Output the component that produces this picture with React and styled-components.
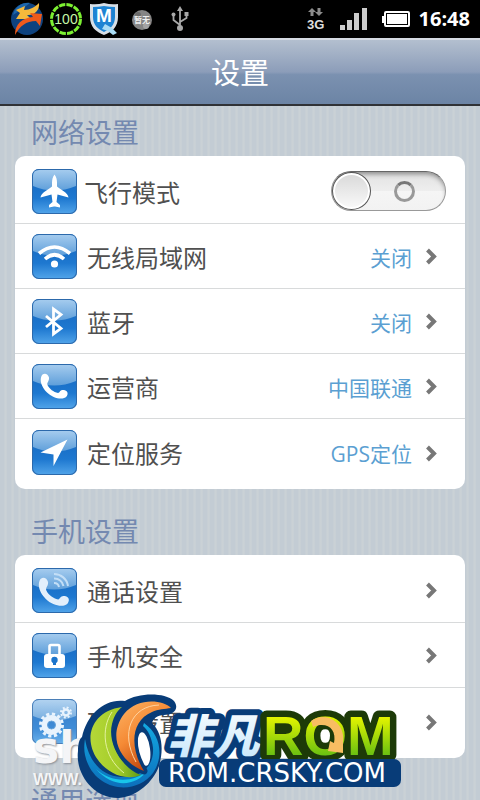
import { useState } from "react";
import styled, { createGlobalStyle } from "styled-components";

const App = () => {
  const [airplane, setAirplane] = useState(false);

  return (
    <Screen>
      <GlobalStyle />
      <StatusBar>
        <StatusGroup $gap={6}>
          <SwirlIcon />
          <BatteryRing />
          <ShieldIcon />
          <MoonIcon />
          <UsbIcon />
        </StatusGroup>
        <StatusGroup $gap={9}>
          <NetworkIcon />
          <SignalIcon />
          <BatteryIcon />
          <Clock>16:48</Clock>
        </StatusGroup>
      </StatusBar>

      <Header>
        <h1>设置</h1>
      </Header>

      <Content>
        <Section>
          <SectionTitle>网络设置</SectionTitle>
          <Card>
            <li>
              <ToggleRow>
                <Tile icon="plane" />
                <Label>飞行模式</Label>
                <Switch
                  type="checkbox"
                  role="switch"
                  checked={airplane}
                  onChange={(e) => setAirplane(e.target.checked)}
                />
              </ToggleRow>
            </li>
            <NavItem icon="wifi" label="无线局域网" value="关闭" />
            <NavItem icon="bluetooth" label="蓝牙" value="关闭" />
            <NavItem icon="phone" label="运营商" value="中国联通" />
            <NavItem icon="location" label="定位服务" value="GPS定位" />
          </Card>
        </Section>

        <Section>
          <SectionTitle>手机设置</SectionTitle>
          <Card>
            <NavItem icon="call" label="通话设置" />
            <NavItem icon="lock" label="手机安全" />
            <NavItem icon="gears" label="硬件设置" />
          </Card>
        </Section>

        <Section>
          <SectionTitle>通用选项</SectionTitle>
        </Section>
      </Content>

      <SiteMark>
        <strong>sh</strong>
        <span>WWW.</span>
      </SiteMark>
      <LogoLayer>
        <RomLogo />
      </LogoLayer>
    </Screen>
  );
};

const NavItem = ({ icon, label, value }) => (
  <li>
    <NavRow type="button">
      <Tile icon={icon} />
      <Label>{label}</Label>
      {value && <Value>{value}</Value>}
      <svg width="12" height="20" viewBox="0 0 12 20" aria-hidden="true">
        <path d="M2.5 4 9 10.500l-6.5 6.500" fill="none" stroke="#777" strokeWidth="4" />
      </svg>
    </NavRow>
  </li>
);

const handset =
  "M9.5 12C11 8.500 16 9 17 13.500C17.500 17 14.500 18.500 15.500 21C17.500 25 21.500 28 26 29C28 28.500 28 25.500 31.500 26C36 26.500 36.500 30 34.500 32.500C31 36.500 21 34.500 15 28.500C9.500 23 7.500 16.500 9.500 12Z";

const glyphs = {
  plane: (
    <path
      fill="#fff"
      d="M22.500 5.500C24.500 8 25 11 25 14V17.500C29 21 36 23.500 36.500 28.500L25.500 25.500 24.500 33 28 36V38.500L23 37.500H22L17 38.500V36L20.500 33 19.500 25.500 8.500 28.500C9 23.500 16 21 20 17.500V14C20 11 20.500 8 22.500 5.500Z"
    />
  ),
  wifi: (
    <g fill="none" stroke="#fff" strokeWidth="3.600">
      <path d="M7 19.500Q22.500 6.500 38 19.500" />
      <path d="M13 25Q22.500 16.500 32 25" />
      <circle cx="22.500" cy="30" r="3.600" fill="#fff" stroke="none" />
    </g>
  ),
  bluetooth: (
    <path
      d="M14 17 29 29.500 21.500 35V10L29 15.500 14 28"
      fill="none"
      stroke="#fff"
      strokeWidth="2.800"
    />
  ),
  phone: <path fill="#fff" d={handset} />,
  location: <path fill="#fff" d="M35.500 9.500 21.500 36V24.500L8.500 22.500Z" />,
  call: (
    <g fill="none" stroke="#c3def6" strokeWidth="2">
      <path
        d={handset}
        fill="#e3effb"
        stroke="none"
        transform="translate(-3 -1) scale(1.120)"
      />
      <path d="M22 6A14 14 0 0 1 36 18" />
      <path d="M22 10.500A9 9 0 0 1 31.500 18" />
      <path d="M22 15A5 5 0 0 1 27 19" />
    </g>
  ),
  lock: (
    <>
      <path
        d="M17.500 21V13.500Q17.500 12 19 12H26Q27.500 12 27.500 13.500V21"
        fill="none"
        stroke="#fff"
        strokeWidth="2.600"
      />
      <rect x="12" y="21" width="21" height="14" rx="3" fill="#fff" />
      <circle cx="22.500" cy="27" r="3.200" fill="#1b74cc" />
      <path d="M21 27H24V32H21Z" fill="#1b74cc" />
    </>
  ),
  gears: (
    <g fill="none" stroke="#e6f2fd">
      <circle cx="19.500" cy="26" r="7" strokeWidth="6" />
      <circle cx="19.500" cy="26" r="11" strokeWidth="3" strokeDasharray="3.200 2.560" />
      <circle cx="19.500" cy="26" r="4" stroke="#4e94d4" strokeWidth="1" />
      <circle cx="34" cy="13.500" r="3" strokeWidth="2.400" />
      <circle cx="34" cy="13.500" r="5" strokeWidth="2" strokeDasharray="1.970 1.960" />
    </g>
  ),
};

const Tile = ({ icon }) => (
  <TileBox $pale={icon === "gears"} aria-hidden="true">
    <svg width="45" height="45" viewBox="0 0 45 45">
      <defs>
        <linearGradient id={`gloss-${icon}`} x2="0" y2="1">
          <stop stopColor="#a4cbee" />
          <stop offset="1" stopColor="#5f9fda" />
        </linearGradient>
      </defs>
      <path
        d="M1 7Q1 1 7 1H38Q44 1 44 7V17Q22 26 1 17Z"
        fill={`url(#gloss-${icon})`}
      />
      {glyphs[icon]}
    </svg>
  </TileBox>
);

const SwirlIcon = () => (
  <svg width="34" height="36" viewBox="0 0 34 36" aria-hidden="true">
    <circle cx="17" cy="18" r="16" fill="#0d427f" />
    <path d="M3 14C5 5 13 1 20 2L12 8Z" fill="#1d67ad" />
    <path
      d="M6 9 15 5 14 9C20 9 25 6 29 2C30 9 24 15 17 14L21 18 6 18 10 12Z"
      fill="#f5b93c"
    />
    <path
      d="M5 34C5 23 12 17 23 16L20 12 32 13 30 25 26 20C16 20 10 25 5 34Z"
      fill="#ee5a1b"
    />
  </svg>
);

const BatteryRing = () => (
  <svg width="32" height="34" viewBox="0 0 32 34">
    <circle
      cx="16"
      cy="17"
      r="14.500"
      fill="none"
      stroke="#7cf032"
      strokeWidth="3"
      strokeDasharray="6.400 1.192"
    />
    <text
      x="16"
      y="22"
      textAnchor="middle"
      fontFamily="Liberation Sans, sans-serif"
      fontSize="14"
      fill="#c4f7a8"
    >
      100
    </text>
  </svg>
);

const ShieldIcon = () => (
  <svg width="32" height="34" viewBox="0 0 32 34">
    <path
      d="M2 2Q9 3 16 1Q23 3 30 2V15C30 25 24 30 16 33C8 30 2 25 2 15Z"
      fill="#d8dfe6"
    />
    <path
      d="M5 5Q10 5 16 4Q22 5 27 5V15C27 23 22 27 16 30C10 27 5 23 5 15Z"
      fill="#1d83d3"
    />
    <path d="M17 22 24 26 29 31 25 33 20 29 14 27Z" fill="#a9dcf5" />
    <text
      x="16"
      y="20"
      textAnchor="middle"
      fontFamily="Liberation Sans, sans-serif"
      fontWeight="700"
      fontSize="19"
      fill="#fff"
    >
      M
    </text>
  </svg>
);

const MoonIcon = () => (
  <svg width="32" height="34" viewBox="0 0 32 34">
    <circle cx="16" cy="18" r="10" fill="#858585" />
    <circle cx="12" cy="13" r="3" fill="#6a6a6a" />
    <circle cx="20" cy="24" r="3" fill="#a3a3a3" />
    <text
      x="16"
      y="21"
      textAnchor="middle"
      fontFamily="Noto Sans CJK SC, sans-serif"
      fontWeight="700"
      fontSize="8"
      fill="#eee"
    >
      暂无
    </text>
  </svg>
);

const UsbIcon = () => (
  <svg width="32" height="34" viewBox="0 0 32 34" aria-hidden="true">
    <g fill="none" stroke="#a8a8a8" strokeWidth="1.800">
      <path d="M16 28V7M16 23 9.500 18V13M16 20 22.500 16V12" />
    </g>
    <g fill="#a8a8a8">
      <circle cx="16" cy="26" r="3" />
      <circle cx="9.500" cy="12.500" r="2" />
      <path d="M16 4 19 9H13ZM20.500 10H24.500V14H20.500Z" />
    </g>
  </svg>
);

const NetworkIcon = () => (
  <svg width="20" height="26" viewBox="0 0 20 26">
    <path
      d="M5 2 9 6H6.500V10H3.500V6H1ZM12 10 8 6H10.500V2H13.500V6H16Z"
      fill="#8c8c8c"
    />
    <text
      x="0"
      y="23"
      fontFamily="Liberation Sans, sans-serif"
      fontWeight="700"
      fontSize="13"
      fill="#ddd"
    >
      3G
    </text>
  </svg>
);

const SignalIcon = () => (
  <svg width="36" height="24" viewBox="0 0 36 24" aria-hidden="true">
    <path
      d="M4 18H9V23H4ZM11 13H16V23H11ZM18 6H23V23H18ZM26 1H31V23H26Z"
      fill="#ccc"
    />
  </svg>
);

const BatteryIcon = () => (
  <svg width="29" height="18" viewBox="0 0 29 18" aria-hidden="true">
    <path d="M1 6H4V13H1Z" fill="#fff" />
    <rect x="4" y="2" width="24" height="14" rx="1" fill="none" stroke="#fff" strokeWidth="2" />
    <rect x="6" y="4" width="20" height="10" fill="#fff" />
  </svg>
);

const RomLogo = () => (
  <svg width="326" height="107" viewBox="78 693 326 107">
    <defs>
      <linearGradient id="ice" x2="0" y2="1">
        <stop stopColor="#fff" />
        <stop offset="1" stopColor="#c3e6fb" />
      </linearGradient>
      <linearGradient id="lime" x2="0" y2="1">
        <stop offset="0.200" stopColor="#e6f500" />
        <stop offset="0.850" stopColor="#62bd12" />
      </linearGradient>
      <linearGradient id="leaf">
        <stop stopColor="#b5d838" />
        <stop offset="0.550" stopColor="#a4cc2a" />
        <stop offset="1" stopColor="#5d9b16" />
      </linearGradient>
      <linearGradient id="flame" x2="0.600" y2="1">
        <stop stopColor="#fdb566" />
        <stop offset="0.500" stopColor="#f58a35" />
        <stop offset="1" stopColor="#b93c08" />
      </linearGradient>
      <linearGradient id="sea" x2="0" y2="1">
        <stop stopColor="#13a9e2" />
        <stop offset="1" stopColor="#0c6fbb" />
      </linearGradient>
    </defs>

    <path
      d="M83 737C88 714 106 698 126 701C139 693 165 692 175 701C181 709 174 715 165 715C158 715 154 719 153 723C163 733 165 749 160 766C154 782 139 796 120 798C95 799 76 774 79 751C79 745 80 739 83 737Z"
      fill="#083c78"
    />
    <path
      d="M145 723C162 735 165 757 154 773C136 797 94 791 86 755C85 750 85 746 86 739C90 763 104 776 122 777C145 778 155 764 154 748C153 738 149 730 144 726Z"
      fill="url(#sea)"
    />
    <path d="M97 769C112 783 134 783 148 771C137 786 114 789 97 769Z" fill="#18c5ea" />
    <ellipse cx="145" cy="749" rx="6" ry="17" fill="#fff" transform="rotate(-8 145 749)" />
    <path
      d="M123 707C99 710 89 728 92 744C95 763 118 784 142 775C124 769 108 744 113 724C115 716 118 711 123 707Z"
      fill="url(#leaf)"
    />
    <path
      d="M113 712C102 728 103 756 125 773"
      fill="none"
      stroke="#e4f2a0"
      strokeWidth="1"
    />
    <path
      d="M172 708C164 700 139 697 125 714C109 735 119 761 145 771C131 749 131 721 153 712C159 709 166 709 172 708Z"
      fill="url(#flame)"
      stroke="#083c78"
      strokeWidth="7"
      strokeLinejoin="round"
      paintOrder="stroke"
    />
    <path d="M160 705C132 706 121 733 137 762" fill="none" stroke="#ffd3a0" strokeWidth="1" />

    <g strokeLinejoin="round" paintOrder="stroke">
      <text
        x="168"
        y="753"
        fontFamily="Noto Sans CJK SC, sans-serif"
        fontWeight="900"
        fontStyle="italic"
        fontSize="46"
        fill="url(#ice)"
        stroke="#083c78"
        strokeWidth="12"
      >
        非凡
      </text>
      <text
        x="264"
        y="755"
        fontFamily="Liberation Sans, sans-serif"
        fontWeight="700"
        fontSize="56"
        fill="url(#lime)"
        stroke="#1d3a08"
        strokeWidth="13"
      >
        ROM
      </text>
    </g>
    <path
      d="M312 721C327 710 347 723 344 742L344 753 329 751 331 741 335 743C338 729 328 721 314 727Z"
      fill="#f8bd62"
    />
    <rect x="160" y="759" width="242" height="28" rx="7" fill="#083c78" />
    <text
      x="169"
      y="782"
      fontFamily="DejaVu Sans, sans-serif"
      fontSize="26"
      fill="#fff"
    >
      ROM.CRSKY.COM
    </text>
  </svg>
);

const GlobalStyle = createGlobalStyle`
  *,
  *::before,
  *::after {
    box-sizing: border-box;
  }

  body {
    margin: 0;
    font-family: "Open Sans", "Noto Sans CJK SC", sans-serif;
  }
`;

const Screen = styled.div`
  position: relative;
  display: flex;
  flex-direction: column;
  height: 100vh;
  overflow: hidden;
  background: #c5cdd4;
`;

const StatusBar = styled.div`
  display: flex;
  flex: none;
  align-items: center;
  justify-content: space-between;
  height: 38px;
  padding: 0 10px;
  background: #000;
`;

const StatusGroup = styled.div`
  display: flex;
  align-items: center;
  gap: ${(props) => props.$gap}px;
`;

const Clock = styled.time`
  color: #fff;
  font-size: 20px;
  font-weight: 700;
  line-height: 38px;
`;

const Header = styled.header`
  flex: none;
  border-top: 2px solid #d5dae2;
  border-bottom: 2px solid #303236;
  background: linear-gradient(#b3bfcf, #8c9db9 50%, #7b91b0 54%, #6c84a5);

  h1 {
    margin: 0;
    padding-top: 2px;
    color: #fff;
    font-size: 29px;
    font-weight: 400;
    line-height: 62px;
    text-align: center;
  }
`;

const Content = styled.main`
  flex: 1;
  min-height: 0;
  padding: 4px 15px 20px;
  overflow-y: auto;
  scrollbar-width: none;
  background: repeating-linear-gradient(
    90deg,
    #c3ccd4 0,
    #c3ccd4 4px,
    #cbd2d6 5px,
    #c7cfd5 7px
  );
`;

const Section = styled.section`
  & + & {
    margin-top: 20px;
  }
`;

const SectionTitle = styled.h2`
  margin: 0;
  padding-left: 16px;
  color: #7489b0;
  font-size: 27px;
  font-weight: 400;
  line-height: 46px;
`;

const Card = styled.ul`
  margin: 0;
  padding: 3px 0;
  list-style: none;
  border-radius: 10px;
  background: #fff;

  li {
    height: 65px;
    border-bottom: 1px solid #d8dadb;
  }

  li:last-child {
    height: 67px;
    border-bottom: 0;
  }
`;

const ToggleRow = styled.label`
  display: flex;
  align-items: center;
  gap: 7px;
  height: 100%;
  padding: 0 19px 0 17px;
`;

const NavRow = styled.button`
  display: flex;
  align-items: center;
  gap: 10px;
  width: 100%;
  height: 100%;
  padding: 0 28px 0 17px;
  border: 0;
  background: none;
  font-family: inherit;
  text-align: left;
  cursor: pointer;
`;

const TileBox = styled.span`
  flex: none;
  width: 45px;
  height: 45px;
  overflow: hidden;
  border-radius: 7px;
  background: linear-gradient(#1a70c8 40%, #1e78d0 65%, #52a5ea);
  box-shadow: inset 0 0 0 1px #2c69ab;
  opacity: ${(props) => (props.$pale ? 0.85 : 1)};

  svg {
    display: block;
  }
`;

const Label = styled.span`
  flex: 1;
  padding-top: 3px;
  color: #505050;
  font-size: 24px;
  line-height: 32px;
`;

const Value = styled.span`
  margin-right: 3px;
  padding-top: 3px;
  color: #5b9fd2;
  font-size: 21px;
  line-height: 32px;
`;

const Switch = styled.input`
  display: flex;
  flex: none;
  align-items: center;
  gap: 23px;
  width: 115px;
  height: 40px;
  margin: 0;
  appearance: none;
  border: 1px solid #999;
  border-top-color: #666;
  border-radius: 20px;
  background: linear-gradient(#e2e2e2, #eee 50%, #f5f5f5 51%, #f2f2f2);
  box-shadow: inset 0 4px 5px -2px #888;

  &::before {
    content: "";
    width: 39px;
    height: 38px;
    border: 1px solid #555;
    border-radius: 50%;
    background: linear-gradient(#d8d8d8, #fafafa);
    box-shadow: inset 0 0 0 2px #fff;
  }

  &::after {
    content: "";
    width: 21px;
    height: 21px;
    border: 3px solid #999;
    border-top-color: #777;
    border-radius: 50%;
  }

  &:checked {
    flex-direction: row-reverse;
    background: #8fc1ea;
  }
`;

const SiteMark = styled.div`
  position: absolute;
  bottom: 10px;
  left: 33px;
  display: flex;
  flex-direction: column;
  color: #f4f5f7;
  text-shadow: 1px 1px 2px #8a8f96;
  pointer-events: none;

  strong {
    font: 700 44px/44px "DejaVu Sans", sans-serif;
  }

  span {
    font: 700 16px/20px "Liberation Sans", sans-serif;
  }
`;

const LogoLayer = styled.div`
  position: absolute;
  right: 0;
  bottom: 0;
  left: 0;
  display: flex;
  justify-content: center;
  pointer-events: none;
`;

export default App;
